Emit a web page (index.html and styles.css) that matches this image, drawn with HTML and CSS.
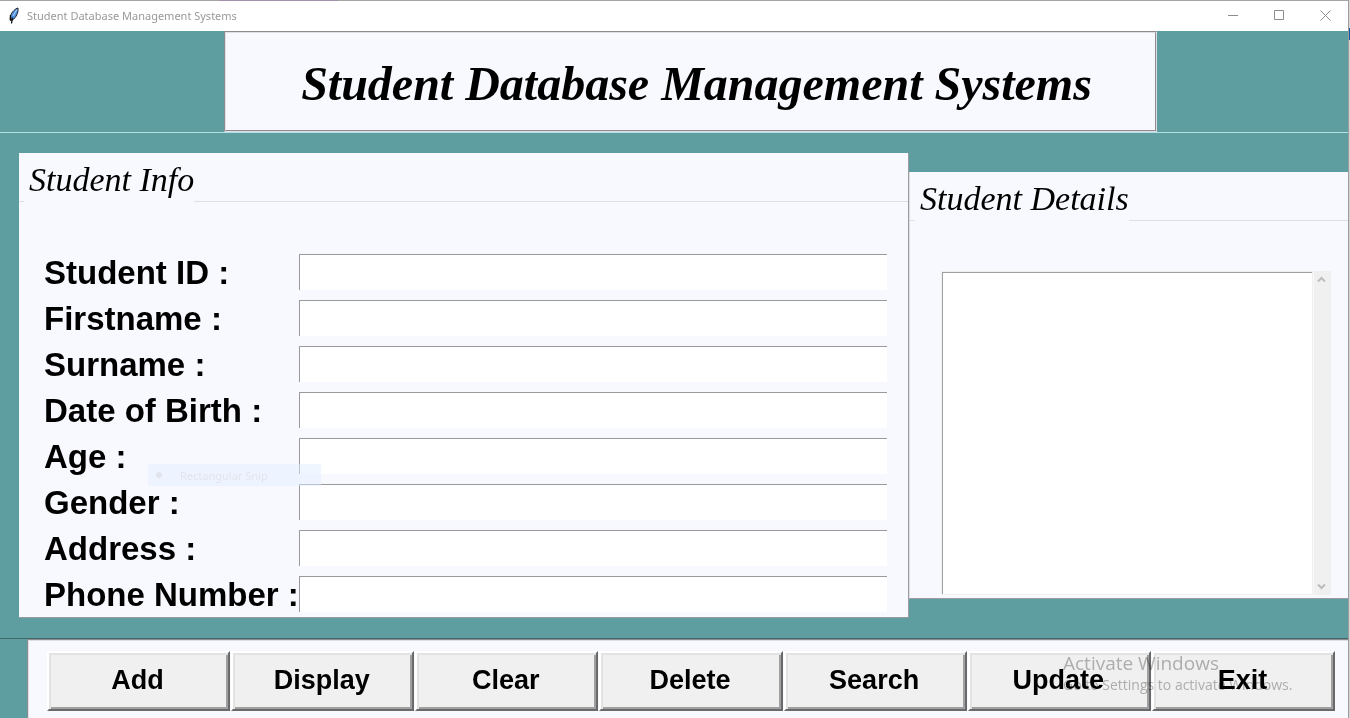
FILE: index.html
```
<!DOCTYPE html>
<html lang="en">
<head>
<meta charset="utf-8">
<title>Student Database Management Systems</title>
<link rel="stylesheet" href="styles.css">
</head>
<body>
<div class="window">
  <div class="titlebar">
    <svg class="feather" width="12" height="18" viewBox="0 0 12 18" aria-hidden="true">
      <path d="M10 1C7.500 1.500 3.500 5 2.500 9L2 12.500L4.500 13C8 10.500 10.500 6 10 1Z" fill="#4f8fe0" stroke="#222" stroke-width="1"/>
      <path d="M4.500 10.500L3.500 16.500M2.500 8L2.500 13L5 12.500" fill="none" stroke="#111" stroke-width="1.300"/>
      <path d="M9 2.500L5 9" stroke="#b8d8fa" stroke-width="1"/>
    </svg>
    <span class="caption">Student Database Management Systems</span>
    <button class="winbtn" type="button" aria-label="Minimize"><svg width="11" height="11" viewBox="0 0 11 11"><path d="M0 5.500H10" stroke="#8c8c8c" fill="none"/></svg></button>
    <button class="winbtn" type="button" aria-label="Maximize"><svg width="11" height="11" viewBox="0 0 11 11"><path d="M.5 .5H9.500V9.500H.5Z" stroke="#8c8c8c" fill="none"/></svg></button>
    <button class="winbtn" type="button" aria-label="Close"><svg width="11" height="11" viewBox="0 0 11 11"><path d="M.5 .5L10.500 10.500M10.500 .5L.5 10.500" stroke="#8c8c8c" fill="none"/></svg></button>
  </div>

  <header class="banner"><h1 class="banner-title">Student Database Management Systems</h1></header>

  <main class="data">
    <section class="panel info">
      <div class="panel-head"><h2>Student Info</h2></div>
      <form class="fields">
        <label for="sid">Student ID :</label><input id="sid" type="text">
        <label for="first">Firstname :</label><input id="first" type="text">
        <label for="sur">Surname :</label><input id="sur" type="text">
        <label for="dob">Date of Birth :</label><input id="dob" type="text">
        <label for="age">Age :</label><input id="age" type="text">
        <label for="gender">Gender :</label><input id="gender" type="text">
        <label for="addr">Address :</label><input id="addr" type="text">
        <label for="phone">Phone Number :</label><input id="phone" type="text">
      </form>
      <div class="snip"><span class="dot"></span><span class="snip-text">Rectangular Snip</span></div>
    </section>
    <section class="panel details">
      <div class="panel-head"><h2>Student Details</h2></div>
      <div class="list">
        <textarea class="listbox" aria-label="Student Details"></textarea>
        <div class="scrollbar">
          <button type="button" aria-label="Scroll up"><svg width="9" height="7" viewBox="0 0 9 7"><path d="M1 5.500L4.500 2L8 5.500" fill="none" stroke="#bcbcbc" stroke-width="2"/></svg></button>
          <button type="button" aria-label="Scroll down"><svg width="9" height="7" viewBox="0 0 9 7"><path d="M1 1.500L4.500 5L8 1.500" fill="none" stroke="#bcbcbc" stroke-width="2"/></svg></button>
        </div>
      </div>
    </section>
  </main>

  <footer class="actions">
    <div class="buttons">
      <button type="button">Add</button>
      <button type="button">Display</button>
      <button type="button">Clear</button>
      <button type="button">Delete</button>
      <button type="button">Search</button>
      <button type="button">Update</button>
      <button type="button">Exit</button>
    </div>
  </footer>
  <div class="activate">
    <div class="activate-title">Activate Windows</div>
    <div class="activate-text">Go to Settings to activate Windows.</div>
  </div>
</div>
</body>
</html>
```
FILE: styles.css
```
* { box-sizing: border-box; }

html {
  background: linear-gradient(#d8d8d8 28px, #0d5aa0 28px, #0d5aa0 40px, #d4d4d4 40px);
}

body {
  margin: 0;
  padding-right: 1px;
  font-family: "Liberation Sans", Arial, sans-serif;
  color: #000;
}

h1, h2 {
  margin: 0;
  font-family: "Edwardian Script ITC", "Liberation Serif", serif;
  font-style: italic;
}

button { font-family: inherit; }

.window {
  position: relative;
  display: flex;
  flex-direction: column;
  min-height: 100vh;
  overflow: hidden;
  background: #5f9ea0;
  border-right: 1px solid #9c9c9c;
}

.titlebar {
  display: flex;
  align-items: center;
  height: 31px;
  padding-left: 8px;
  background:
    linear-gradient(90deg, #a5a5a5 219px, #a590ab 219px, #a590ab 338px, #a5a5a5 338px) top / 100% 1px no-repeat,
    #fff;
}

.caption {
  flex: 1;
  padding-left: 7px;
  font: 11px "Segoe UI", "Noto Sans", sans-serif;
  color: #999;
}

.winbtn {
  display: flex;
  align-items: center;
  justify-content: center;
  width: 46px;
  height: 30px;
  padding: 0;
  background: none;
  border: 0;
}

.banner {
  padding: 0 191px 0 224px;
  border-bottom: 1px solid #b5e0e3;
}

.banner-title {
  height: 101px;
  padding: 2px 0 0 12px;
  border: 2px groove #dedee4;
  background: #f8f8ff;
  font-size: 48px;
  line-height: 97px;
  text-align: center;
  white-space: nowrap;
}

.data {
  display: grid;
  grid-template-columns: 890fr 439fr;
  align-items: start;
  padding: 20px 0 21px 19px;
}

.panel {
  position: relative;
  background: #f8f8ff;
  border-bottom: 1px solid #9c9ca0;
}

.panel-head {
  display: flex;
  align-items: flex-end;
}

.panel-head::before,
.panel-head::after {
  content: "";
  width: 5px;
  border-bottom: 1px solid #dedee4;
}

.panel-head::after { flex: 1; }

.panel-head h2 {
  height: 49px;
  padding: 0 0 0 5px;
  font-size: 34px;
  font-weight: 400;
  line-height: 54px;
  white-space: nowrap;
}

.info { border-right: 1px solid #9c9ca0; }

.details {
  margin-top: 19px;
  border-left: 1px solid #dedee4;
}

.fields {
  display: grid;
  grid-template-columns: 255px 1fr;
  grid-auto-rows: 46px;
  align-items: center;
  padding: 47px 21px 0 25px;
}

.fields label {
  padding-top: 2px;
  font-size: 33px;
  font-weight: 700;
  line-height: 38px;
  white-space: nowrap;
}

.fields input {
  width: 100%;
  height: 36px;
  padding: 0 4px;
  border: 0 solid #9a9a9e;
  border-width: 1px 0 0 1px;
  background: #fff;
  font-size: 24px;
}

.list {
  display: flex;
  gap: 1px;
  padding: 50px 17px 3px 31px;
}

.listbox {
  flex: 1;
  min-width: 0;
  height: 324px;
  padding: 4px;
  border: 1px solid #f0f0f0;
  background: #fff;
  box-shadow: inset 1px 1px #a0a0a0;
  resize: none;
}

.scrollbar {
  display: flex;
  flex-direction: column;
  justify-content: space-between;
  width: 17px;
  background: #f0f0f0;
}

.scrollbar button {
  display: flex;
  align-items: center;
  justify-content: center;
  height: 17px;
  padding: 0 2px 0 0;
  background: none;
  border: 0;
}

.actions {
  flex: 1;
  margin-top: -1px;
  padding-left: 27px;
  border-top: 1px solid #3f6668;
}

.buttons {
  height: 100%;
  display: grid;
  grid-template-columns: repeat(7, 1fr);
  align-items: start;
  gap: 1px;
  padding: 10px 13px 8px 18px;
  background: #f8f8ff;
  border: 0 groove #dedee4;
  border-width: 2px 0 0 2px;
}

.buttons button {
  height: 60px;
  padding: 0 2px 2px 0;
  border: 2px solid;
  border-color: #fff #696969 #696969 #fff;
  background: #f0f0f0;
  box-shadow: inset 2px 2px #e3e3e3, inset -2px -2px #a0a0a0;
  font-size: 27px;
  font-weight: 700;
  color: #000;
}

/* Translucent overlays above the form and the button bar */
.snip {
  position: absolute;
  left: 129px;
  top: 311px;
  display: flex;
  align-items: center;
  width: 173px;
  height: 22px;
  background: rgba(225, 238, 255, .5);
  pointer-events: none;
}

.dot {
  width: 6px;
  height: 6px;
  margin: 0 18px 0 8px;
  border-radius: 50%;
  background: #e2e4ec;
}

.snip-text {
  font: 11px "Segoe UI", "Noto Sans", sans-serif;
  color: #e2e4ec;
  white-space: nowrap;
}

.activate {
  position: absolute;
  right: 49px;
  bottom: 24px;
  width: 236px;
  font-family: "Segoe UI", "Open Sans", sans-serif;
  color: #b8b8b8;
  mix-blend-mode: multiply;
  white-space: nowrap;
  pointer-events: none;
}

.activate-title { font-size: 19px; line-height: 24px; }
.activate-text { font-size: 14px; line-height: 20px; }
```
